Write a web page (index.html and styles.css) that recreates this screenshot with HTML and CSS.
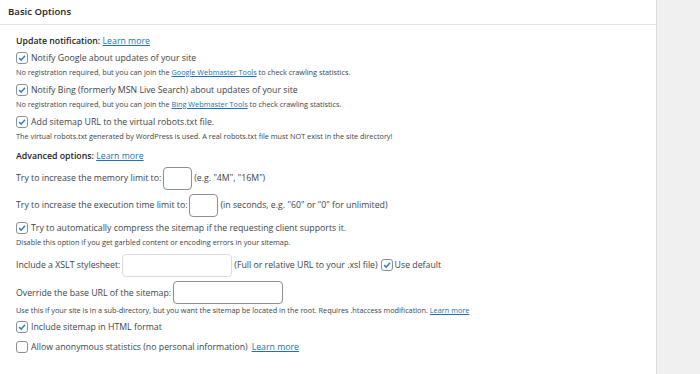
FILE: index.html
```html
<!DOCTYPE html>
<html lang="en">

<head>
  <meta charset="UTF-8" />
  <title>Basic Options</title>
  <link rel="stylesheet" href="styles.css">
</head>

<body>
  <div class="postbox">
    <h3 class="hndle">Basic Options</h3>

    <div class="inside">
      <div class="title first">Update notification: <a href="#">Learn more</a></div>

      <label class="opt">
        <span class="cb checked"><svg viewBox="0 0 12 12"><path d="M2.6 6.2 L5 8.6 L9.6 3.2" /></svg></span>
        Notify Google about updates of your site
      </label>
      <div class="note">No registration required, but you can join the <a href="#">Google Webmaster Tools</a> to check crawling statistics.</div>

      <label class="opt">
        <span class="cb checked"><svg viewBox="0 0 12 12"><path d="M2.6 6.2 L5 8.6 L9.6 3.2" /></svg></span>
        Notify Bing (formerly MSN Live Search) about updates of your site
      </label>
      <div class="note">No registration required, but you can join the <a href="#">Bing Webmaster Tools</a> to check crawling statistics.</div>

      <label class="opt">
        <span class="cb checked"><svg viewBox="0 0 12 12"><path d="M2.6 6.2 L5 8.6 L9.6 3.2" /></svg></span>
        Add sitemap URL to the virtual robots.txt file.
      </label>
      <div class="note">The virtual robots.txt generated by WordPress is used. A real robots.txt file must NOT exist in the site directory!</div>

      <div class="title">Advanced options: <a href="#">Learn more</a></div>

      <div class="field mem">
        Try to increase the memory limit to: <input type="text" class="small-input" /> (e.g. "4M", "16M")
      </div>

      <div class="field exec">
        Try to increase the execution time limit to: <input type="text" class="small-input" /> (in seconds, e.g. "60" or "0" for unlimited)
      </div>

      <label class="opt compress">
        <span class="cb checked"><svg viewBox="0 0 12 12"><path d="M2.6 6.2 L5 8.6 L9.6 3.2" /></svg></span>
        Try to automatically compress the sitemap if the requesting client supports it.
      </label>
      <div class="note">Disable this option if you get garbled content or encoding errors in your sitemap.</div>

      <div class="field xslt">
        Include a XSLT stylesheet: <input type="text" class="wide-input" disabled /> (Full or relative URL to your .xsl file)
        <span class="cb checked"><svg viewBox="0 0 12 12"><path d="M2.6 6.2 L5 8.6 L9.6 3.2" /></svg></span>
        Use default
      </div>

      <div class="field base">
        Override the base URL of the sitemap: <input type="text" class="wide-input" />
      </div>
      <div class="note">Use this if your site is in a sub-directory, but you want the sitemap be located in the root. Requires .htaccess modification. <a href="#">Learn more</a></div>

      <label class="opt html">
        <span class="cb checked"><svg viewBox="0 0 12 12"><path d="M2.6 6.2 L5 8.6 L9.6 3.2" /></svg></span>
        Include sitemap in HTML format
      </label>

      <label class="opt anon">
        <span class="cb"></span>
        Allow anonymous statistics (no personal information) <a href="#">Learn more</a>
      </label>
    </div>
  </div>
</body>

</html>
```

FILE: styles.css
```css
body {
  margin: 0;
  background: #f0f0f1;
  font-family: "Open Sans", "Noto Sans", sans-serif;
  font-size: 8.75px;
  color: #3c434a;
}

a {
  color: #2271b1;
}

.postbox {
  width: 656px;
  height: 374px;
  background: #fff;
  border-right: 1px solid #dcdcde;
}

.hndle {
  margin: 0;
  height: 24px;
  line-height: 24px;
  padding-left: 8px;
  font-size: 9.6px;
  font-weight: 600;
  color: #1d2327;
  border-bottom: 1px solid #e2e4e7;
}

.inside {
  padding: 8px 16px 0;
}

.title {
  height: 16px;
  line-height: 16px;
  font-weight: 600;
  color: #1d2327;
  margin-top: 6px;
}

.title a {
  font-weight: 400;
}

.title.first {
  margin-top: 0;
}

.opt {
  display: flex;
  align-items: center;
  gap: 3px;
  height: 16px;
  margin-top: 4px;
}

.title + .opt {
  margin-top: 1px;
}

.opt a {
  margin-left: 1px;
}

.note {
  height: 12px;
  line-height: 12px;
  font-size: 7.3px;
}

.cb {
  display: inline-flex;
  width: 12px;
  height: 12px;
  box-sizing: border-box;
  border: 1px solid #8c8f94;
  border-radius: 3px;
  background: #fff;
  flex-shrink: 0;
}

.cb svg {
  width: 10px;
  height: 10px;
}

.cb path {
  fill: none;
  stroke: #3582c4;
  stroke-width: 1.9;
}

.field {
  display: flex;
  align-items: center;
  gap: 2px;
  height: 24px;
  margin-top: 3px;
}

.field.mem {
  margin-top: 2px;
}

.field.xslt {
  margin-top: 5px;
}

.field.xslt .cb {
  margin-left: 1px;
}

.field.base {
  margin-top: 4px;
  height: 23px;
}

input {
  box-sizing: border-box;
  height: 23px;
  border: 1px solid #8c8f94;
  border-radius: 4px;
  background: #fff;
  padding: 0 4px;
  font: inherit;
}

.small-input {
  width: 29px;
}

.wide-input {
  width: 110px;
}

input:disabled {
  border-color: #dcdcde;
}

.opt.compress {
  margin-top: 3px;
}

.opt.html {
  margin-top: 3px;
}
```
